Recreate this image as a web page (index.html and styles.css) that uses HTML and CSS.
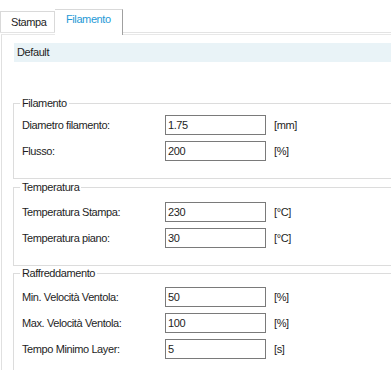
FILE: index.html
```html
<!DOCTYPE html>
<html lang="it">
<head>
    <meta charset="UTF-8">
    <meta name="viewport" content="width=device-width, initial-scale=1.0">
    <title>Profilo filamento</title>
    <link rel="stylesheet" href="styles.css">
</head>
<body>

<!-- schede -->
<div class="tabs">
    <div class="tab">Stampa</div>
    <div class="tab tab-active">Filamento</div>
</div>

<div class="panel">
    <div class="profile">Default</div>

    <fieldset class="group group-filament">
        <legend>Filamento</legend>
        <div class="row">
            <label>Diametro filamento:</label>
            <input type="text" value="1.75">
            <span class="unit">[mm]</span>
        </div>
        <div class="row">
            <label>Flusso:</label>
            <input type="text" value="200">
            <span class="unit">[%]</span>
        </div>
    </fieldset>

    <fieldset class="group group-temp">
        <legend>Temperatura</legend>
        <div class="row">
            <label>Temperatura Stampa:</label>
            <input type="text" value="230">
            <span class="unit">[°C]</span>
        </div>
        <div class="row">
            <label>Temperatura piano:</label>
            <input type="text" value="30">
            <span class="unit">[°C]</span>
        </div>
    </fieldset>

    <fieldset class="group group-cooling">
        <legend>Raffreddamento</legend>
        <div class="row">
            <label>Min. Velocità Ventola:</label>
            <input type="text" value="50">
            <span class="unit">[%]</span>
        </div>
        <div class="row">
            <label>Max. Velocità Ventola:</label>
            <input type="text" value="100">
            <span class="unit">[%]</span>
        </div>
        <div class="row">
            <label>Tempo Minimo Layer:</label>
            <input type="text" value="5">
            <span class="unit">[s]</span>
        </div>
    </fieldset>
</div>

</body>
</html>
```

FILE: styles.css
```css
body {
    margin: 0;
    height: 370px;
    font-family: "Liberation Sans", Arial, sans-serif;
    font-size: 11px;
    letter-spacing: -0.4px;
    color: #1e1e1e;
    background-color: #fff;
    overflow: hidden;
}

/* barra delle schede */
.tabs {
    display: flex;
    align-items: flex-end;
    height: 33px;
    box-sizing: border-box;
    border-bottom: 1px solid #e3e3e3;
}
.tab {
    box-sizing: border-box;
    width: 55px;
    height: 21px;
    padding: 4px 0 0 10px;
    line-height: 13px;
    border: 1px solid #d9d9d9;
    border-bottom: none;
    background-color: #fff;
}
.tab-active {
    position: relative;
    z-index: 1;
    width: 68px;
    height: 26px;
    margin-bottom: -3px;
    padding: 3px 0 0 11px;
    border-left: none;
    border-right: 1px solid #a0a0a0;
    color: #1f9ad6;
}

/* contenuto della scheda */
.panel {
    margin: 1px 0 0 1px;
    height: 335px;
    overflow: hidden;
    border-top: 1px solid #e8e8e8;
    border-left: 1px solid #e0e0e0;
}
.profile {
    margin: 8px 0 0 12px;
    height: 19px;
    line-height: 19px;
    padding-left: 3px;
    background-color: #e9f3f7;
}

.group {
    margin: 0 0 0 11px;
    padding: 0 0 17px 8px;
    min-width: 0;
    border: 1px solid #dcdcdc;
    border-right: none;
}
.group legend {
    padding: 0 2px;
    margin-left: -2px;
    line-height: 13px;
}
.group-filament { margin-top: 35px; padding-top: 5px; }
.group-temp { margin-top: 2px; padding-top: 8px; }
.group-cooling { margin-top: 1px; padding-top: 7px; }

.row {
    display: flex;
    align-items: center;
    height: 20px;
}
.row + .row {
    margin-top: 6px;
}
.row label {
    flex: none;
    width: 143px;
}
.row input {
    box-sizing: border-box;
    width: 101px;
    height: 20px;
    margin: 0;
    padding: 0 2px;
    border: 1px solid #7a7a7a;
    font: inherit;
    letter-spacing: inherit;
    color: #1e1e1e;
    outline: none;
}
.unit {
    margin-left: 8px;
}
```
